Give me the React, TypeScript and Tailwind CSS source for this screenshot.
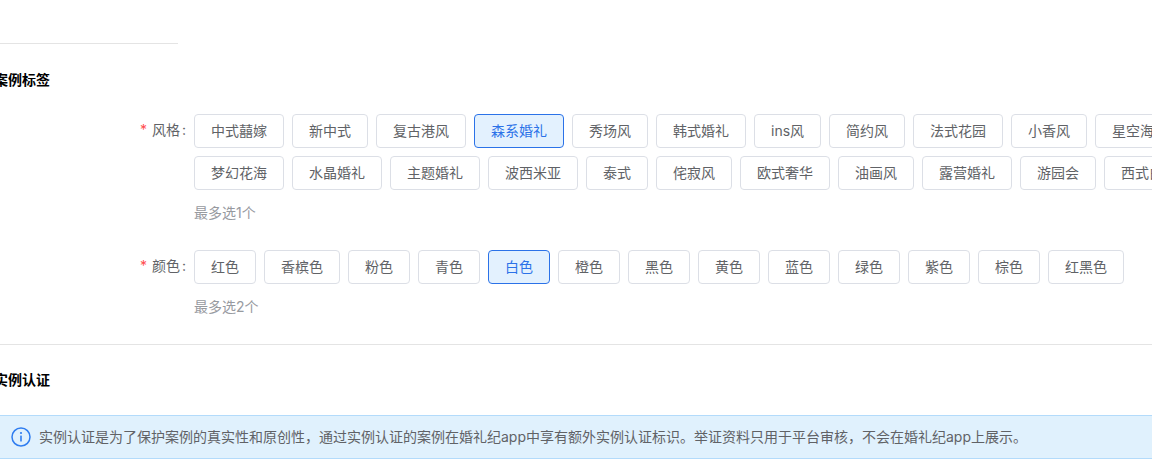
const STYLE_ROW_1 = ["中式囍嫁", "新中式", "复古港风", "森系婚礼", "秀场风", "韩式婚礼", "ins风", "简约风", "法式花园", "小香风", "星空海"];
const STYLE_ROW_2 = ["梦幻花海", "水晶婚礼", "主题婚礼", "波西米亚", "泰式", "侘寂风", "欧式奢华", "油画风", "露营婚礼", "游园会", "西式白"];
const COLORS = ["红色", "香槟色", "粉色", "青色", "白色", "橙色", "黑色", "黄色", "蓝色", "绿色", "紫色", "棕色", "红黑色"];

const Tag = ({ label, active }: { label: string; active?: boolean }) => (
  <span
    className={
      active
        ? "h-[34px] shrink-0 px-4 flex items-center rounded border border-[#2b72e8] bg-[#e3f1fe] text-sm text-[#2b72e8]"
        : "h-[34px] shrink-0 px-4 flex items-center rounded border border-[#dcdfe6] bg-white text-sm text-[#606266]"
    }
  >
    {label}
  </span>
);

const FieldLabel = ({ text }: { text: string }) => (
  <div className="w-[194px] shrink-0 pr-[8px] h-[32px] flex items-center justify-end text-sm text-[#606266]">
    <span className="text-[#ff4d4f] mr-[5px]">*</span>
    {text}
    <span className="ml-[2px]">:</span>
  </div>
);

const App = () => {
  return (
    <div
      className="w-[1152px] h-[460px] overflow-hidden bg-white"
      style={{ fontFamily: 'Inter, "Noto Sans CJK SC", sans-serif' }}
    >
      <div className="pt-[43px]">
        <div className="w-[178px] border-t border-[#e4e4e4]" />
      </div>

      <h2 className="mt-[27px] -ml-[6px] h-[18px] leading-[18px] text-sm font-bold text-black">案例标签</h2>

      {/* Style tags */}
      <div className="mt-[25px] flex">
        <FieldLabel text="风格" />
        <div>
          <div className="flex gap-2 w-[958px] overflow-hidden">
            {STYLE_ROW_1.map((s) => (
              <Tag key={s} label={s} active={s === "森系婚礼"} />
            ))}
          </div>
          <div className="mt-2 flex gap-2 w-[958px] overflow-hidden">
            {STYLE_ROW_2.map((s) => (
              <Tag key={s} label={s} />
            ))}
          </div>
          <p className="mt-[14px] h-[18px] leading-[18px] text-sm text-[#979a9f]">最多选1个</p>
        </div>
      </div>

      {/* Colour tags */}
      <div className="mt-[28px] flex">
        <FieldLabel text="颜色" />
        <div>
          <div className="flex gap-2">
            {COLORS.map((c) => (
              <Tag key={c} label={c} active={c === "白色"} />
            ))}
          </div>
          <p className="mt-[14px] h-[18px] leading-[18px] text-sm text-[#979a9f]">最多选2个</p>
        </div>
      </div>

      <div className="mt-[28px] border-t border-[#e4e4e4]" />

      <h2 className="mt-[26px] -ml-[6px] h-[18px] leading-[18px] text-sm font-bold text-black">实例认证</h2>

      {/* Notice */}
      <div className="mt-[26px] h-[44px] flex items-center gap-2 pl-[11px] border-y border-[#b3dbfb] bg-[#e0f1fd] text-sm text-[#606266]">
        <svg width="20" height="20" viewBox="0 0 20 20" fill="none" className="shrink-0" aria-hidden>
          <circle cx="10" cy="10" r="9" stroke="#2f7df0" strokeWidth="1.5" />
          <circle cx="10" cy="6" r="1.1" fill="#2f7df0" />
          <rect x="9.2" y="8.6" width="1.6" height="6" rx="0.5" fill="#2f7df0" />
        </svg>
        实例认证是为了保护案例的真实性和原创性，通过实例认证的案例在婚礼纪app中享有额外实例认证标识。举证资料只用于平台审核，不会在婚礼纪app上展示。
      </div>
    </div>
  );
};

export default App;
